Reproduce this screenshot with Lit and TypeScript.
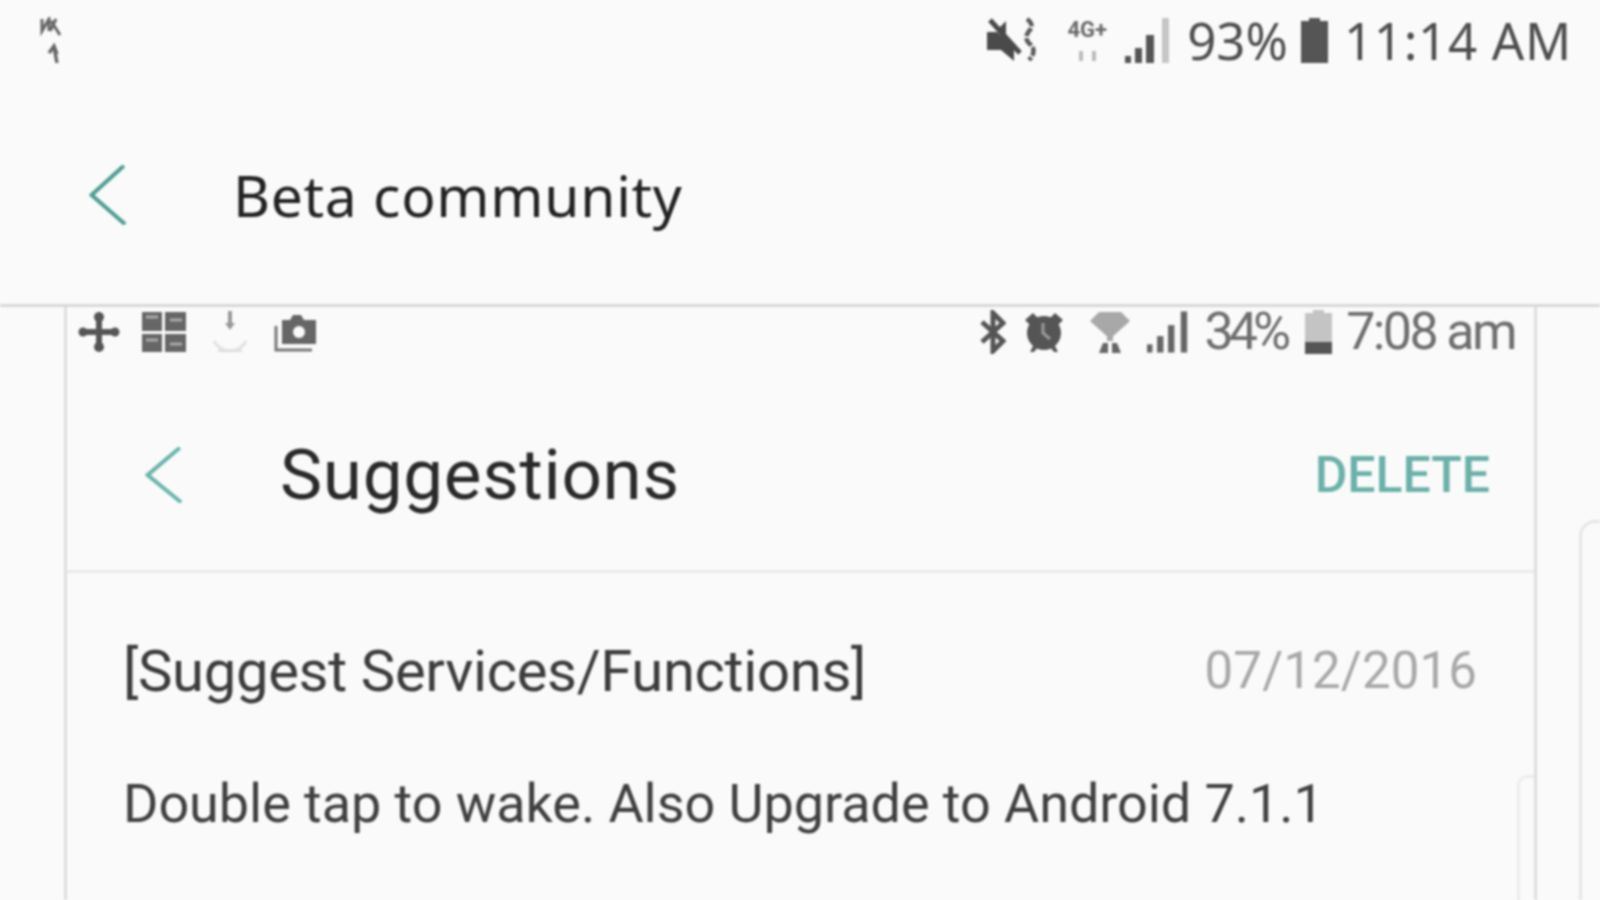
import { LitElement, html, css } from "lit";
import { customElement } from "lit/decorators.js";

const chevron = (w: number, h: number, c: string) => html`<svg class="chev" width=${w} height=${h} viewBox="0 0 32 60" preserveAspectRatio="none" fill="none" stroke=${c} stroke-width="3.8" stroke-linecap="round" stroke-linejoin="round"><path d="M29 2 L3 30 L30 58"/></svg>`;

const signal = (w: number, h: number) => html`<svg width=${w} height=${h} viewBox="0 0 46 45"><g fill="#555"><rect x="0" y="38" width="6" height="7"/><rect x="10" y="30" width="7" height="15"/><rect x="21" y="17" width="8" height="28"/></g><rect x="37" y="0" width="7" height="45" fill="#c6c6c6"/></svg>`;

@customElement("app-root")
export class AppRoot extends LitElement {
  static styles = css`
    :host { display: block; width: 1600px; height: 900px; overflow: hidden; background: #fafafa; }
    .page { width: 1600px; height: 900px; display: flex; flex-direction: column; background: #fafafa; filter: blur(1.1px); font-family: Roboto, "Liberation Sans", sans-serif; }
    svg { display: block; flex: none; }

    .top { height: 304px; border-bottom: 3px solid #d8d8d8; box-sizing: content-box; display: flex; flex-direction: column; flex: none; }
    .status { height: 80px; display: flex; align-items: flex-start; padding: 17px 28px 0 39px; box-sizing: border-box; flex: none; }
    .status .right { margin-left: auto; display: flex; align-items: center; height: 46px; }
    .status .t { font-size: 51px; line-height: 46px; color: #4e4e4e; white-space: nowrap; font-family: "Noto Sans", Roboto, sans-serif; }
    .clock { letter-spacing: 0.7px; }
    .pct { margin: 0 12px 0 16px; }
    .g4 { margin: 0 15px 0 25px; display: flex; flex-direction: column; align-items: center; width: 46px; height: 44px; }
    .g4 .lbl { font-family: Roboto, sans-serif; font-size: 22px; line-height: 24px; font-weight: 700; color: #6a6a6a; white-space: nowrap; }
    .batt { margin-right: 15px; }
    .bar { flex: 1; display: flex; align-items: center; padding: 6px 0 0 88px; }
    .bar .title { margin-left: 107px; font-family: "Noto Sans", sans-serif; font-size: 57px; line-height: 70px; color: #222; letter-spacing: 0.7px; white-space: nowrap; }

    .row { flex: 1; display: flex; min-height: 0; }
    .phone { margin-left: 64px; width: 1473px; box-sizing: border-box; border-left: 3px solid #dedede; border-right: 3px solid #dedede; display: flex; flex-direction: column; position: relative; flex: none; }
    .side { flex: 1; margin: 213px 0 0 42px; border-left: 3px solid #e6e6e6; border-top: 3px solid #e6e6e6; border-top-left-radius: 16px; }

    .sub-status { height: 46px; margin-left: -3px; display: flex; align-items: center; padding: 3px 19px 0 14px; box-sizing: border-box; flex: none; }
    .sub-status .left { display: flex; align-items: center; gap: 22px; }
    .sub-status .right { margin-left: auto; display: flex; align-items: center; }
    .sub-status .t { font-family: Roboto, sans-serif; font-size: 52px; line-height: 46px; color: #6e6e6e; white-space: nowrap; }
    .sub-clock { letter-spacing: -2.6px; margin-left: 14px; }
    .sub-pct { letter-spacing: -5px; margin-left: 16px; }
    .alarm { margin-left: 18px; }
    .wifi { margin-left: 26px; }
    .sig { margin-left: 17px; }
    .sub-batt { margin-left: 19px; }

    .head { height: 220px; box-sizing: border-box; border-bottom: 3px solid #eaeaea; display: flex; align-items: center; padding: 26px 44px 0 77px; flex: none; }
    .head .title { margin-left: 98px; font-size: 71px; font-weight: 400; line-height: 80px; color: #2a2a2a; letter-spacing: 0.7px; }
    .head .del { margin-left: auto; font-size: 50px; font-weight: 500; line-height: 60px; color: #6ab1a9; }

    .body { padding: 63px 57px 0 56px; }
    .meta { display: flex; align-items: center; height: 70px; }
    .tag { font-size: 58px; line-height: 70px; color: #3c3c3c; letter-spacing: -0.35px; }
    .date { margin-left: auto; font-size: 51px; line-height: 70px; color: #a8a8a8; letter-spacing: 0.1px; }
    .msg { margin-top: 66px; font-size: 54px; line-height: 64px; color: #404040; white-space: nowrap; letter-spacing: -0.06px; }
    .notch { position: absolute; right: 0; bottom: -3px; width: 14px; height: 125px; border-left: 3px solid #ececec; border-top: 3px solid #ececec; border-top-left-radius: 10px; }
  `;

  render() {
    return html`<div class="page">
      <div class="top">
        <div class="status">
          <svg width="24" height="46" viewBox="0 0 24 46" fill="none" stroke="#666" stroke-width="3"><path d="M3 2 V14 L10 2 V14 M11 14 L17 2 M12 4 L21 18"/><path d="M10 36 L15 29 L18 37 M15 30 L18 46" stroke-width="3.4"/></svg>
          <div class="right">
            <svg width="52" height="46" viewBox="0 0 52 46"><path d="M0 15 H10 L27 30 V44 L14 33 H0 Z M12 11 L19 4 V17 Z" fill="#4a4a4a"/><path d="M3 3 L33 36" stroke="#4a4a4a" stroke-width="5"/><path d="M40 2 Q48 8 42 14 Q36 22 44 28 Q50 34 42 43" stroke="#5a5a5a" stroke-width="4.5" fill="none" stroke-dasharray="9 2"/></svg>
            <div class="g4">
              <span class="lbl">4G+</span>
              <svg width="46" height="20" viewBox="0 0 46 20"><path d="M17 9 V19 M30 9 V19" stroke="#bbb" stroke-width="4"/></svg>
            </div>
            ${signal(46, 45)}
            <span class="t pct">93%</span>
            <svg class="batt" width="29" height="45" viewBox="0 0 29 45"><path d="M9 0 H20 V3 H28 V45 H1 V3 H9 Z" fill="#555"/></svg>
            <span class="t clock">11:14 AM</span>
          </div>
        </div>
        <div class="bar">
          ${chevron(38, 60, "#4f9f94")}
          <span class="title">Beta community</span>
        </div>
      </div>
      <div class="row">
        <div class="phone">
          <div class="sub-status">
            <div class="left">
              <svg width="42" height="42" viewBox="0 0 42 42" fill="#555"><circle cx="21" cy="6" r="5"/><circle cx="21" cy="36" r="5"/><circle cx="5" cy="21" r="4.5"/><circle cx="37" cy="21" r="4.5"/><rect x="5" y="18" width="32" height="6"/><rect x="18" y="8" width="6" height="26"/></svg>
              <svg width="44" height="40" viewBox="0 0 44 40" fill="#666"><rect x="0" y="0" width="20" height="19"/><rect x="23" y="0" width="21" height="19"/><rect x="0" y="22" width="20" height="18"/><rect x="23" y="22" width="21" height="18"/><path d="M4 5 H16 M28 8 H40 M4 28 H16 M28 32 H40" stroke="#aaa" stroke-width="3"/></svg>
              <svg width="44" height="42" viewBox="0 0 44 42" fill="none"><path d="M22 0 V16" stroke="#999" stroke-width="4"/><path d="M17 12 L22 19 L27 12 Z" fill="#999"/><path d="M6 30 A18 18 0 0 0 38 30" stroke="#e2e2e2" stroke-width="3"/><path d="M10 40 H34" stroke="#ddd" stroke-width="2"/></svg>
              <svg width="44" height="40" viewBox="0 0 44 40"><path d="M8 8 H16 L19 3 H27 L30 8 H42 V32 H8 Z" fill="#666"/><circle cx="25" cy="20" r="6" fill="#fafafa"/><path d="M2 14 V38 H38" fill="none" stroke="#777" stroke-width="3"/></svg>
            </div>
            <div class="right">
              <svg width="26" height="44" viewBox="0 0 26 44" fill="none" stroke="#555" stroke-width="5"><path d="M2 12 L23 31 L13 41 V3 L23 13 L2 32"/></svg>
              <svg class="alarm" width="40" height="40" viewBox="0 0 40 40"><circle cx="20" cy="21" r="17" fill="#555"/><path d="M1 8 L9 1 L14 6 L6 13 Z M39 8 L31 1 L26 6 L34 13 Z M6 40 L10 32 L14 35 L10 40 Z M34 40 L30 32 L26 35 L30 40 Z" fill="#555"/><path d="M19 11 V21 L26 27" stroke="#9a9a9a" stroke-width="3" fill="none"/></svg>
              <svg class="wifi" width="40" height="42" viewBox="0 0 40 42"><path d="M0 10 L9 1 H31 L40 10 L20 28 Z" fill="#a8a8a8"/><path d="M17 24 H23 V30 H17 Z" fill="#a8a8a8"/><path d="M9 42 L13 32 H18 V42 Z M31 42 L27 32 H22 V42 Z" fill="#666"/></svg>
              <svg class="sig" width="42" height="42" viewBox="0 0 46 45"><g fill="#666"><rect x="0" y="36" width="6" height="9"/><rect x="11" y="27" width="7" height="18"/><rect x="23" y="15" width="7" height="30"/><rect x="37" y="0" width="7" height="45"/></g></svg>
              <span class="t sub-pct">34%</span>
              <svg class="sub-batt" width="27" height="44" viewBox="0 0 27 44"><path d="M8 0 H19 V3 H27 V44 H0 V3 H8 Z" fill="#c4c4c4"/><rect y="32" width="27" height="12" fill="#555"/></svg>
              <span class="t sub-clock">7:08 am</span>
            </div>
          </div>
          <div class="head">
            ${chevron(38, 56, "#68b5ab")}
            <span class="title">Suggestions</span>
            <span class="del">DELETE</span>
          </div>
          <div class="body">
            <div class="meta">
              <span class="tag">[Suggest Services/Functions]</span>
              <span class="date">07/12/2016</span>
            </div>
            <div class="msg">Double tap to wake. Also Upgrade to Android 7.1.1</div>
          </div>
          <div class="notch"></div>
        </div>
        <div class="side"></div>
      </div>
    </div>`;
  }
}
